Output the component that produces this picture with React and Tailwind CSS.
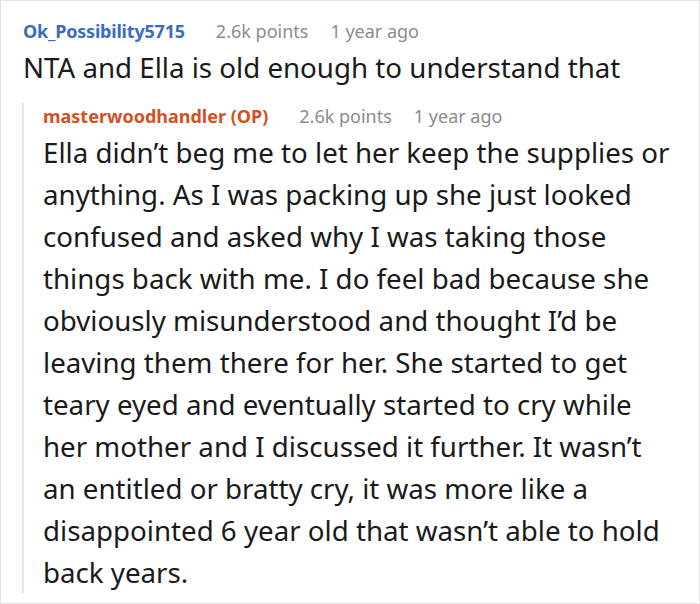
export default function App() {
  const body =
    "Ella didn’t beg me to let her keep the supplies or anything. As I was packing up she just looked confused and asked why I was taking those things back with me. I do feel bad because she obviously misunderstood and thought I’d be leaving them there for her. She started to get teary eyed and eventually started to cry while her mother and I discussed it further. It wasn’t an entitled or bratty cry, it was more like a disappointed 6 year old that wasn’t able to hold back years.";

  return (
    <div className="w-[700px] h-[604px] bg-white border border-[#e4e4e4] font-['Noto_Sans',sans-serif] text-[#1a1a1a] overflow-hidden">
      {/* Parent comment */}
      <div className="pl-[22px] pt-[17px]">
        <div className="flex items-baseline text-[18px] leading-[26px]">
          <span className="font-bold text-[#3d6bbf] tracking-[-0.2px]">Ok_Possibility5715</span>
          <span className="ml-[31px] text-[#8c8c8c]">2.6k points</span>
          <span className="ml-[22px] text-[#8c8c8c]">1 year ago</span>
        </div>
        <p className="mt-[5px] text-[27.7px] leading-[36px]">
          NTA and Ella is old enough to understand that
        </p>
      </div>

      {/* Reply */}
      <div className="ml-[21px] mt-[18px] border-l-[2px] border-[#e6e6e6] pl-[19px] pr-[20px]">
        <div className="flex items-baseline text-[18px] leading-[26px]">
          <span className="font-bold text-[#d4501e]">masterwoodhandler (OP)</span>
          <span className="ml-[31px] text-[#8c8c8c]">2.6k points</span>
          <span className="ml-[22px] text-[#8c8c8c]">1 year ago</span>
        </div>
        <p className="mt-[2px] mb-[-5px] text-[27.7px] leading-[42px]">{body}</p>
      </div>
    </div>
  );
}
